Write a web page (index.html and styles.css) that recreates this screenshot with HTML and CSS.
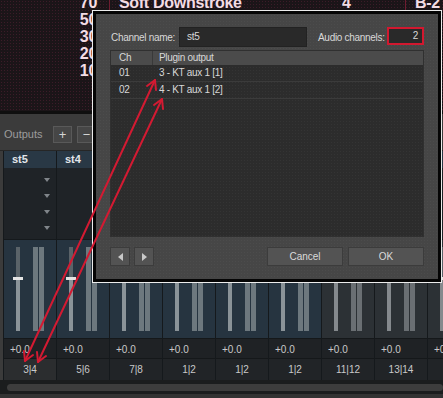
FILE: index.html
```html
<!DOCTYPE html>
<html lang="en">
<head>
  <meta charset="UTF-8">
  <meta name="viewport" content="width=device-width, initial-scale=1.0">
  <title>Outputs</title>
  <link rel="stylesheet" href="styles.css">
</head>
<body>

<div id="app">
  <div class="preset-pane">
    <div class="preset-list">
      <div class="preset-row">
        <div class="preset-num">70</div>
        <div class="preset-name">Soft Downstroke</div>
        <div class="preset-val">4</div>
        <div class="preset-key">B-2</div>
      </div>
      <div class="preset-row">
        <div class="preset-num">50</div>
        <div class="preset-name"></div>
        <div class="preset-val"></div>
        <div class="preset-key"></div>
      </div>
      <div class="preset-row">
        <div class="preset-num">30</div>
        <div class="preset-name"></div>
        <div class="preset-val"></div>
        <div class="preset-key"></div>
      </div>
      <div class="preset-row">
        <div class="preset-num">20</div>
        <div class="preset-name"></div>
        <div class="preset-val"></div>
        <div class="preset-key"></div>
      </div>
      <div class="preset-row">
        <div class="preset-num">10</div>
        <div class="preset-name"></div>
        <div class="preset-val"></div>
        <div class="preset-key"></div>
      </div>
    </div>
  </div>

  <div class="pane-split"></div>

  <div class="outputs-bar">
    <span class="outputs-label">Outputs</span>
    <button class="tool-btn">+</button>
    <button class="tool-btn">&minus;</button>
  </div>

  <div class="mixer">
    <div class="strip">
      <div class="strip-name">st5</div>
      <div class="strip-sends"><i class="caret"></i><i class="caret"></i><i class="caret"></i><i class="caret"></i></div>
      <div class="strip-fader">
        <div class="fader"><div class="fader-top"></div><div class="knob"></div><div class="fader-bottom"></div></div>
        <div class="meter"></div><div class="meter"></div>
      </div>
      <div class="strip-gain">+0.0</div>
      <div class="strip-route selected">3|4</div>
    </div>
    <div class="strip">
      <div class="strip-name">st4</div>
      <div class="strip-sends"><i class="caret"></i><i class="caret"></i><i class="caret"></i><i class="caret"></i></div>
      <div class="strip-fader">
        <div class="fader"><div class="fader-top"></div><div class="knob"></div><div class="fader-bottom"></div></div>
        <div class="meter"></div><div class="meter"></div>
      </div>
      <div class="strip-gain">+0.0</div>
      <div class="strip-route">5|6</div>
    </div>
    <div class="strip">
      <div class="strip-name"></div>
      <div class="strip-sends"><i class="caret"></i><i class="caret"></i><i class="caret"></i><i class="caret"></i></div>
      <div class="strip-fader">
        <div class="fader"><div class="fader-top"></div><div class="knob"></div><div class="fader-bottom"></div></div>
        <div class="meter"></div><div class="meter"></div>
      </div>
      <div class="strip-gain">+0.0</div>
      <div class="strip-route">7|8</div>
    </div>
    <div class="strip">
      <div class="strip-name"></div>
      <div class="strip-sends"><i class="caret"></i><i class="caret"></i><i class="caret"></i><i class="caret"></i></div>
      <div class="strip-fader">
        <div class="fader"><div class="fader-top"></div><div class="knob"></div><div class="fader-bottom"></div></div>
        <div class="meter"></div><div class="meter"></div>
      </div>
      <div class="strip-gain">+0.0</div>
      <div class="strip-route">1|2</div>
    </div>
    <div class="strip">
      <div class="strip-name"></div>
      <div class="strip-sends"><i class="caret"></i><i class="caret"></i><i class="caret"></i><i class="caret"></i></div>
      <div class="strip-fader">
        <div class="fader"><div class="fader-top"></div><div class="knob"></div><div class="fader-bottom"></div></div>
        <div class="meter"></div><div class="meter"></div>
      </div>
      <div class="strip-gain">+0.0</div>
      <div class="strip-route">1|2</div>
    </div>
    <div class="strip">
      <div class="strip-name"></div>
      <div class="strip-sends"><i class="caret"></i><i class="caret"></i><i class="caret"></i><i class="caret"></i></div>
      <div class="strip-fader">
        <div class="fader"><div class="fader-top"></div><div class="knob"></div><div class="fader-bottom"></div></div>
        <div class="meter"></div><div class="meter"></div>
      </div>
      <div class="strip-gain">+0.0</div>
      <div class="strip-route">1|2</div>
    </div>
    <div class="strip aux">
      <div class="strip-name"></div>
      <div class="strip-sends"><i class="caret"></i><i class="caret"></i><i class="caret"></i><i class="caret"></i></div>
      <div class="strip-fader">
        <div class="fader"><div class="fader-top"></div><div class="knob"></div><div class="fader-bottom"></div></div>
        <div class="meter"></div><div class="meter"></div>
      </div>
      <div class="strip-gain">+0.0</div>
      <div class="strip-route">11|12</div>
    </div>
    <div class="strip aux">
      <div class="strip-name"></div>
      <div class="strip-sends"><i class="caret"></i><i class="caret"></i><i class="caret"></i><i class="caret"></i></div>
      <div class="strip-fader">
        <div class="fader"><div class="fader-top"></div><div class="knob"></div><div class="fader-bottom"></div></div>
        <div class="meter"></div><div class="meter"></div>
      </div>
      <div class="strip-gain">+0.0</div>
      <div class="strip-route">13|14</div>
    </div>
    <div class="strip aux">
      <div class="strip-name"></div>
      <div class="strip-sends"><i class="caret"></i><i class="caret"></i><i class="caret"></i><i class="caret"></i></div>
      <div class="strip-fader">
        <div class="fader"><div class="fader-top"></div><div class="knob"></div><div class="fader-bottom"></div></div>
        <div class="meter"></div><div class="meter"></div>
      </div>
      <div class="strip-gain">+0.0</div>
      <div class="strip-route"></div>
    </div>
  </div>

  <div class="scroll-area"><div class="scroll-thumb"></div></div>
</div>

<!-- channel config dialog -->
<div class="dialog">
  <div class="dialog-body">
    <div class="dialog-fields">
      <label class="field-label" for="channel-name">Channel name:</label>
      <div class="text-input" id="channel-name">st5</div>
      <label class="field-label audio" for="audio-channels">Audio channels:</label>
      <div class="num-input" id="audio-channels">2</div>
    </div>

    <div class="channel-table">
      <div class="table-head">
        <div class="cell-ch">Ch</div>
        <div class="cell-out">Plugin output</div>
      </div>
      <div class="table-row">
        <div class="cell-ch">01</div>
        <div class="cell-out">3 - KT aux 1 [1]</div>
      </div>
      <div class="table-row">
        <div class="cell-ch">02</div>
        <div class="cell-out">4 - KT aux 1 [2]</div>
      </div>
    </div>

    <div class="dialog-buttons">
      <button class="btn arrow-btn">
        <svg width="5" height="8" viewBox="0 0 5 8"><polygon points="5,0 5,8 0,4" fill="#c9c9c9"/></svg>
      </button>
      <button class="btn arrow-btn">
        <svg width="5" height="8" viewBox="0 0 5 8"><polygon points="0,0 0,8 5,4" fill="#c9c9c9"/></svg>
      </button>
      <div class="spacer"></div>
      <button class="btn text-btn">Cancel</button>
      <button class="btn text-btn">OK</button>
    </div>
  </div>
</div>

<!-- annotation arrows -->
<svg class="arrows" width="443" height="398" viewBox="0 0 443 398">
  <g fill="none" stroke="#d31a32" stroke-width="2" stroke-linecap="round" stroke-linejoin="round">
    <line x1="155" y1="80" x2="25" y2="361"/>
    <polyline points="147,86 155,80 156,90"/>
    <polyline points="33,355 25,361 24,351"/>
    <line x1="162" y1="99" x2="38" y2="362"/>
    <polyline points="154,105 162,99 163,109"/>
    <polyline points="46,356 38,362 37,352"/>
  </g>
</svg>

</body>
</html>
```

FILE: styles.css
```css
body {
  margin: 0;
  width: 443px;
  height: 398px;
  overflow: hidden;
  position: relative;
  background-color: #3b3b3b;
  font-family: "Liberation Sans", Arial, sans-serif;
}

button {
  font-family: inherit;
  padding: 0;
}

/* preset list at the top */

.preset-pane {
  height: 111px;
  overflow: hidden;
  background-color: #1b1518;
  background-image: radial-gradient(rgba(120, 40, 70, 0.35) 0.6px, transparent 1px);
  background-size: 3px 3px;
}

.preset-list {
  margin-top: -6px;
}

.preset-row {
  display: grid;
  grid-template-columns: 110px 221px 74px 1fr;
  height: 17px;
  line-height: 17px;
  font-size: 16px;
  font-weight: bold;
  letter-spacing: -0.3px;
  color: #f3dce4;
  white-space: nowrap;
}

.preset-num {
  text-align: right;
  padding-right: 12px;
  border-right: 1px solid #6e1d30;
}

.preset-name {
  padding-left: 9px;
}

.preset-val {
  padding-left: 11px;
}

.preset-key {
  padding-left: 9px;
  border-left: 1px solid #6e1d30;
}

.pane-split {
  height: 3px;
  background-color: #0f0f0f;
}

/* outputs toolbar */

.outputs-bar {
  display: flex;
  align-items: flex-start;
  height: 36px;
  padding: 12px 0 0 4px;
  box-sizing: border-box;
}

.outputs-label {
  width: 49px;
  line-height: 17px;
  font-size: 11px;
  color: #9c9c9c;
}

.tool-btn {
  width: 19px;
  height: 17px;
  margin-right: 5px;
  background-color: #464646;
  border: 1px solid #595959;
  color: #d4d4d4;
  font-size: 13px;
  line-height: 14px;
}

/* mixer strips */

.mixer {
  display: flex;
  overflow: hidden;
  padding-left: 3px;
  border-top: 1px solid #262626;
}

.strip {
  flex-shrink: 0;
  width: 53px;
  box-sizing: border-box;
  border-left: 1px solid #15191c;
}

.strip-name {
  height: 17px;
  line-height: 17px;
  padding-left: 8px;
  background-color: #293845;
  font-size: 11px;
  font-weight: bold;
  color: #e2e6ea;
}

.strip-sends {
  display: flex;
  flex-direction: column;
  align-items: flex-end;
  height: 72px;
  padding: 10px 6px 0 0;
  box-sizing: border-box;
  background-color: #1f2327;
  border-bottom: 1px solid #15191c;
}

.caret {
  width: 0;
  height: 0;
  margin-bottom: 12px;
  border-left: 3.5px solid transparent;
  border-right: 3.5px solid transparent;
  border-top: 4px solid #80858a;
}

.strip-fader {
  display: flex;
  height: 98px;
  padding-top: 7px;
  box-sizing: border-box;
  background-color: #263440;
}

.fader {
  display: flex;
  flex-direction: column;
  width: 4px;
  height: 84px;
  margin-left: 12px;
}

.fader-top {
  height: 30px;
  background-color: #4c555c;
  background-image: radial-gradient(#6a7278 0.6px, transparent 0.8px);
  background-size: 2px 2px;
}

.knob {
  height: 3px;
  margin: 0 -3px;
  background-color: #e4e4e4;
}

.fader-bottom {
  flex: 1;
  background-color: #8a9398;
}

.meter {
  width: 5px;
  height: 84px;
  margin-left: 1px;
  background-color: #6d787e;
}

.fader + .meter {
  margin-left: 13px;
}

.strip-gain,
.strip-route {
  height: 21px;
  line-height: 21px;
  font-size: 10px;
  color: #c9c9c9;
  box-sizing: border-box;
}

.strip-gain {
  padding-left: 6px;
  background-color: #1f2225;
  border-top: 1px solid #15181a;
  border-bottom: 1px solid #15181a;
}

.strip-route {
  text-align: center;
  background-color: #212427;
}

.strip-route.selected {
  background-color: #2b2d2f;
}

.strip.aux .strip-fader {
  background-color: #2c3135;
}

.strip.aux .fader-bottom {
  background-color: #7c8185;
  background-image: radial-gradient(#8e9397 0.6px, transparent 0.8px);
  background-size: 2px 2px;
}

.strip.aux .meter {
  background-color: #6a6f73;
}

/* horizontal scroller */

.scroll-area {
  height: 18px;
  padding: 4px 0 0 7px;
  box-sizing: border-box;
  background: linear-gradient(#1b1d1e 0 14px, #333 14px);
}

.scroll-thumb {
  height: 7px;
  border-radius: 4px;
  background-color: #3d3d3d;
}

/* dialog */

.dialog {
  position: absolute;
  left: 92px;
  top: 10px;
  width: 350px;
  height: 273px;
  box-sizing: border-box;
  padding: 3px;
  border: 1px solid #ececec;
  background-color: #050505;
}

.dialog-body {
  display: flex;
  flex-direction: column;
  height: 100%;
  box-sizing: border-box;
  padding: 13px 14px;
  background-color: #464646;
  background-image: radial-gradient(#4c4c4c 0.6px, transparent 0.8px);
  background-size: 3px 3px;
  font-size: 10px;
  letter-spacing: -0.3px;
  color: #d8d8d8;
}

.dialog-fields {
  display: flex;
  align-items: center;
  height: 20px;
  white-space: nowrap;
}

.field-label {
  width: 68px;
  padding-left: 1px;
}

.field-label.audio {
  width: 69px;
  margin-left: 10px;
}

.text-input {
  width: 128px;
  height: 20px;
  box-sizing: border-box;
  padding-left: 7px;
  line-height: 18px;
  background-color: #292929;
  border: 1px solid #222;
}

.num-input {
  align-self: flex-start;
  width: 37px;
  height: 18px;
  box-sizing: border-box;
  padding-right: 4px;
  line-height: 14px;
  text-align: right;
  background-color: #292929;
  border: 2px solid #d2182f;
}

.channel-table {
  height: 187px;
  margin-top: 3px;
  box-sizing: border-box;
  border: 1px solid #303030;
  background-color: #2c2c2c;
  background-image: radial-gradient(#343434 0.6px, transparent 0.8px);
  background-size: 3px 3px;
}

.table-head,
.table-row {
  display: grid;
  grid-template-columns: 42px 1fr;
}

.table-head {
  height: 14px;
  line-height: 14px;
  background-color: #4b4b4b;
}

.table-head .cell-ch {
  border-right: 1px solid #393939;
}

.table-row {
  height: 17px;
  line-height: 16px;
  box-sizing: border-box;
  border-bottom: 1px solid #3b3b3b;
}

.cell-ch {
  padding-left: 8px;
}

.cell-out {
  padding-left: 6px;
}

.dialog-buttons {
  display: flex;
  gap: 4px;
  height: 19px;
  margin-top: 10px;
}

.btn {
  height: 19px;
  box-sizing: border-box;
  background-color: #535353;
  border: 1px solid #3c3c3c;
  color: #dadada;
  font-size: 10px;
}

.arrow-btn {
  width: 20px;
  display: flex;
  align-items: center;
  justify-content: center;
}

.spacer {
  flex: 1;
}

.text-btn {
  width: 76px;
}

.text-btn + .text-btn {
  margin-left: 1px;
}

/* red annotation arrows drawn over everything */

.arrows {
  position: absolute;
  left: 0;
  top: 0;
  pointer-events: none;
}
```
